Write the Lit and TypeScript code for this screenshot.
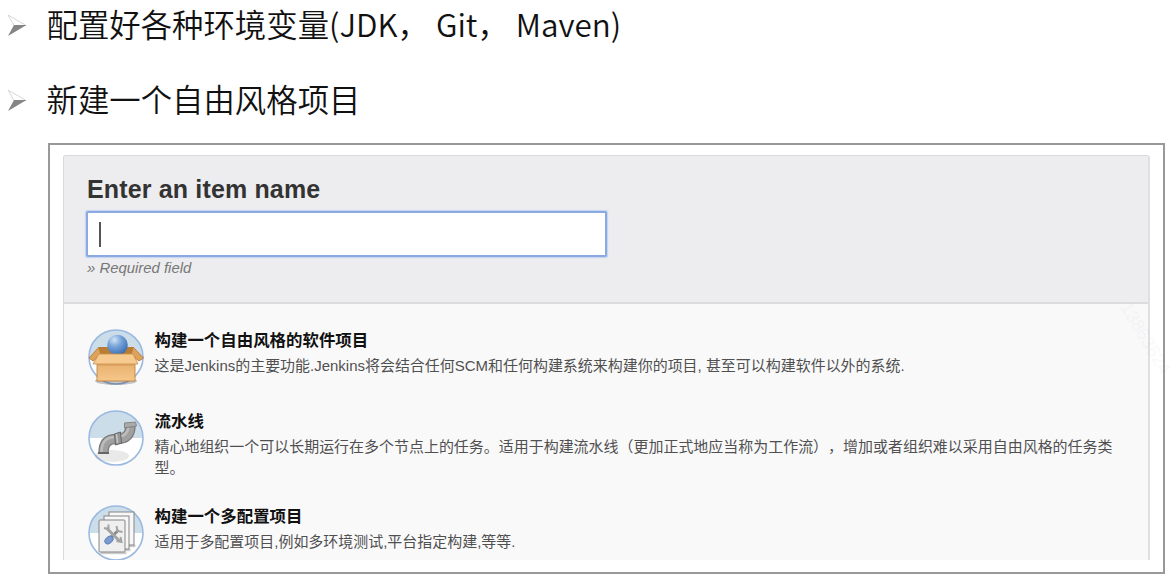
import { LitElement, html, svg, css } from "lit";
import { customElement, property } from "lit/decorators.js";

const boxArt = svg`
  <ellipse cx="29" cy="53" rx="21" ry="4" fill="#000" opacity=".22"/>
  <path d="M12 19 L46 19 L46 30 L12 30Z" fill="#b97d33"/>
  <path d="M12 19 L2 30 L6 33 L14 27Z" fill="#dfa25a" stroke="#ad7433" stroke-width=".8"/>
  <path d="M46 19 L56.500 30 L52 33 L44 27Z" fill="#dfa25a" stroke="#ad7433" stroke-width=".8"/>
  <circle cx="30.500" cy="17" r="10.3" fill="url(#ball)"/>
  <path d="M10 29 H48 V53 H10Z" fill="url(#carton)" stroke="#bd7c34" stroke-width=".8"/>
  <path d="M12 26 H46 L51 36 H6Z" fill="#f7cb90" stroke="#c88d4a" stroke-width=".8"/>
  <path d="M11 37 H47" stroke="#d39753" stroke-width="1"/>`;

const pipeArt = svg`
  <ellipse cx="25" cy="47" rx="17" ry="6" fill="#777" opacity=".16"/>
  <g transform="translate(1.5 0)">
    <path d="M15 44 C15 33 20 30 28 30 C38 30 42 25 42 16" fill="none" stroke="#7b7b7b" stroke-width="10.500"/>
    <path d="M15 44 C15 33 20 30 28 30 C38 30 42 25 42 16" fill="none" stroke="#a0a0a0" stroke-width="8"/>
    <path d="M13 43 C13 32 19 28 27 28 C37 28 40 23 40 16" fill="none" stroke="#bcbcbc" stroke-width="2.5"/>
    <path d="M26 25 L32 23 L33 34 L27 36Z" fill="#999" stroke="#646464" stroke-width="1"/>
    <path d="M28 25 L29 34" stroke="#c9c9c9" stroke-width="1.4"/>
    <path d="M36 14 L47 13 L48 17 L36 19Z" fill="#aaa" stroke="#777" stroke-width=".8"/>
    <path d="M9.500 43 H20.500 V45 H9.500Z" fill="#666"/>
  </g>`;

const pagesArt = svg`
  <g transform="translate(1.5 0)">
    <path d="M12 49 H38 M32 46 H42 M37 42 H47" fill="none" stroke="#000" stroke-opacity=".2" stroke-width="2.5"/>
    <rect x="20.5" y="8" width="25" height="33" fill="#f7f7f7" stroke="#858585"/>
    <rect x="15.5" y="12" width="25" height="33" fill="#f7f7f7" stroke="#858585"/>
    <rect x="10.5" y="16" width="26" height="32" rx="1" fill="#efefef" stroke="#858585"/>
    <path d="M30 26 L22 34" stroke="#888" stroke-width="2.8"/>
    <path d="M18 24 L31 37" stroke="#a3a3a3" stroke-width="3"/>
    <path d="M15.500 24 L20 25 L20 20.500 M28 22 L29 27 L34 28 M28 37 L33 38 L32 33" fill="none" stroke="#a3a3a3" stroke-width="2"/>
    <ellipse cx="20.500" cy="36" rx="4.800" ry="3.300" transform="rotate(-40 20.500 36)" fill="#7b9bd0" stroke="#5577ae" stroke-width=".8"/>
  </g>`;

const projects = [
  {
    title: "构建一个自由风格的软件项目",
    text: "这是Jenkins的主要功能.Jenkins将会结合任何SCM和任何构建系统来构建你的项目, 甚至可以构建软件以外的系统.",
    art: boxArt,
  },
  {
    title: "流水线",
    text: "精心地组织一个可以长期运行在多个节点上的任务。适用于构建流水线（更加正式地应当称为工作流），增加或者组织难以采用自由风格的任务类型。",
    art: pipeArt,
  },
  {
    title: "构建一个多配置项目",
    text: "适用于多配置项目,例如多环境测试,平台指定构建,等等.",
    art: pagesArt,
  },
];

@customElement("project-option")
class ProjectOption extends LitElement {
  @property({ attribute: false }) project: any;

  static styles = css`
    :host { display: grid; grid-template-columns: 56.5px 1fr; column-gap: 11px; align-items: start; }
    .icon { display: block; width: 58px; height: 58px; margin-left: -0.5px; }
    .title { margin: 0; color: #111; font-size: 16.45px; font-weight: 700; line-height: 25px; white-space: nowrap; }
    .text { margin: 2px 0 0; color: #505050; font-size: 14.97px; line-height: 21px; text-spacing-trim: space-all; }
  `;

  render() {
    return html`
      <svg class="icon" viewBox="0 0 58 58">
        <defs>
          <radialGradient id="ball" cx=".35" cy=".25" r=".75">
            <stop offset="0" stop-color="#d3e4f7"/><stop offset=".45" stop-color="#78a4d9"/><stop offset="1" stop-color="#3e70b4"/>
          </radialGradient>
          <linearGradient id="carton" x1="0" y1="0" x2="0" y2="1">
            <stop offset="0" stop-color="#e3a865"/><stop offset="1" stop-color="#f6c78a"/>
          </linearGradient>
        </defs>
        <circle cx="29" cy="29" r="27" fill="#fff"/>
        <path d="M2 29 A27 27 0 0 1 56 29Z" fill="#cbdde9"/>
        <circle cx="29" cy="29" r="27" fill="none" stroke="#9bb9e0" stroke-width="1.6"/>
        ${this.project.art}
      </svg>
      <div>
        <h3 class="title">${this.project.title}</h3>
        <p class="text">${this.project.text}</p>
      </div>`;
  }
}

@customElement("app-root")
class AppRoot extends LitElement {
  static styles = css`
    :host {
      display: block; position: relative; box-sizing: border-box; width: 1175px; height: 581px;
      overflow: hidden; background: #fff; font-family: "Liberation Sans", "Noto Sans CJK SC", sans-serif;
    }
    .bullets { display: grid; row-gap: 25px; height: 143px; align-content: start; box-sizing: border-box; }
    .bullet {
      display: grid; grid-template-columns: 20px 1fr; column-gap: 20px; align-items: center;
      height: 50px; margin-left: 6.5px; color: #111;
      font: 350 31.4px/48px "Noto Sans CJK SC", sans-serif; white-space: pre;
    }
    .bullet span { display: block; height: 50px; }
    .arrow { display: block; width: 20px; height: 24px; }
    .frame {
      box-sizing: border-box; width: 1117px; height: 431px; margin-left: 48px;
      border: 2px solid #999; padding: 10px 13px 12px;
    }
    .panel {
      box-sizing: border-box; width: 1087px; height: 405px; overflow: hidden;
      border: 1px solid #d9d9dc; border-bottom: 0; border-right: 2px solid #e0e0e3; border-radius: 3px 3px 0 0; background: #f9f9fa;
    }
    .head { box-sizing: border-box; height: 148px; padding: 19px 22px 0; border-bottom: 2px solid #dcdcdf; background: #ededef; }
    .label { margin: 0 0 7px 1px; color: #333; font-size: 25px; font-weight: 700; line-height: 29px; letter-spacing: .15px; }
    .field {
      display: flex; align-items: center; box-sizing: border-box; width: 521px; height: 46px;
      padding-left: 11px; border: 2px solid #8baae2; border-radius: 2px; background: #fff; box-shadow: 0 0 1px 0.5px #c3d3f2;
    }
    .caret { width: 2px; height: 25px; background: #555; }
    .hint { margin: 1px 0 0 1px; color: #777; font-size: 14.9px; font-style: italic; line-height: 20px; }
    .list { display: grid; padding: 24px 28px 0 23px; }
    .list > :nth-child(1) { height: 81px; }
    .list > :nth-child(2) { height: 95px; }
    .serial {
      position: absolute; left: 1125px; top: 294px; color: #000; opacity: .02; font-size: 18px; line-height: 20px;
      transform-origin: 0 50%; transform: rotate(59deg); white-space: nowrap;
    }
  `;

  bullet(text: string) {
    return html`<div class="bullet">
      <svg class="arrow" viewBox="0 0 20 24"><path d="M1 2 L19 12.500 H7Z" fill="#fff" stroke="#ccc" stroke-width=".8"/><path d="M7 12 H19.500 L1 23Z" fill="#858585"/></svg><span>${text}</span></div>`;
  }

  render() {
    return html`
      <div class="bullets">
        ${this.bullet("配置好各种环境变量(JDK， Git， Maven)")}
        ${this.bullet("新建一个自由风格项目")}
      </div>
      <div class="frame">
        <section class="panel">
          <header class="head">
            <h2 class="label">Enter an item name</h2>
            <div class="field"><span class="caret"></span></div>
            <p class="hint">» Required field</p>
          </header>
          <div class="list">${projects.map((p) => html`<project-option .project=${p}></project-option>`)}</div>
        </section>
      </div>
      <div class="serial">13863624</div>`;
  }
}
